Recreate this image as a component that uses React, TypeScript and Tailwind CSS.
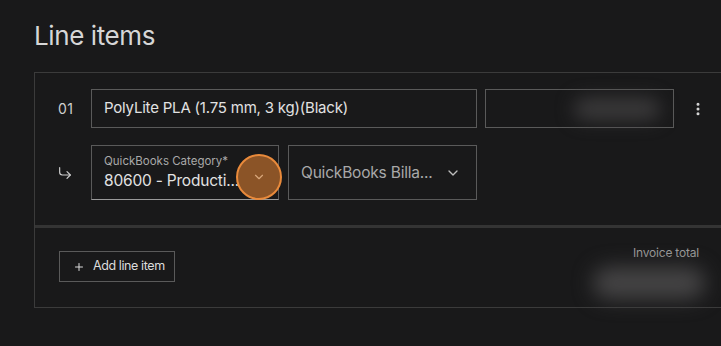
import { ChevronDown, CornerDownRight, EllipsisVertical, Plus } from 'lucide-react';

const font = { fontFamily: 'Inter, "Noto Sans", sans-serif' };

const LineItemRow = () => {
  return (
    <div className="flex flex-col gap-[17px] pt-4 pb-[25px]">
      <div className="flex items-center">
        <div className="w-[56px] pl-[23px] text-[14px] text-[#cfcfcf] tracking-wide">01</div>
        <div className="flex h-[39px] w-[386px] items-center border border-[#5a5a5a] px-3 text-[15px] tracking-[-0.2px] text-[#e2e2e2]">
          PolyLite PLA (1.75 mm, 3 kg)(Black)
        </div>
        <div className="relative ml-2 h-[39px] w-[189px] border border-[#5a5a5a]">
          <div className="absolute left-[88px] top-[8px] h-[22px] w-[86px] rounded-full bg-[#3b3a3b] blur-[9px]" />
        </div>
        <button className="ml-[12px] flex h-6 w-6 items-center justify-center text-[#d8d8d8]">
          <EllipsisVertical size={16} strokeWidth={2.5} />
        </button>
      </div>
      <div className="flex items-center">
        <div className="w-[56px] pl-[22px] text-[#cfcfcf]">
          <CornerDownRight size={16} strokeWidth={1.75} />
        </div>
        <div className="relative flex h-[55px] w-[188px] flex-col justify-center border border-[#5a5a5a] border-b-[#9a9a9a] px-3">
          <span className="text-[11.5px] leading-4 text-[#a9a9a9]">QuickBooks Category*</span>
          <span className="text-[15.5px] leading-6 tracking-[-0.2px] text-[#e2e2e2]">80600 - Producti...</span>
          <div className="absolute left-[144px] top-[8px] flex h-[46px] w-[46px] items-center justify-center rounded-full border-2 border-[#e98a3b] bg-[#8b5427]">
            <ChevronDown size={14} className="text-[#d9a77b]" />
          </div>
        </div>
        <div className="ml-[9px] flex h-[55px] w-[189px] items-center justify-between border border-[#5a5a5a] pl-3 pr-[15px]">
          <span className="text-[15.5px] tracking-[-0.2px] text-[#a9a9a9]">QuickBooks Billa...</span>
          <ChevronDown size={16} className="text-[#bdbdbd]" />
        </div>
      </div>
    </div>
  );
};

export default function App() {
  return (
    <div className="h-[346px] w-[721px] overflow-hidden bg-[#19191a]" style={font}>
      <div className="pl-[34px] pt-[18px]">
        <h2 className="text-[26px] leading-[36px] tracking-[-0.4px] text-[#d6d6d6]">Line items</h2>
        <div className="mt-[18px] w-[700px] border border-[#3b3b3b]">
          <LineItemRow />
          <div className="h-[3px] bg-[#343434]" />
          <div className="relative flex h-[79px] items-start justify-between pl-6 pr-[34px] pt-[23px]">
            <button className="flex h-[31px] w-[116px] items-center gap-2 border border-[#5a5a5a] pl-[13px] text-[12.5px] tracking-[-0.4px] text-[#dcdcdc]">
              <Plus size={12} />
              Add line item
            </button>
            <div className="relative flex flex-col items-end">
              <span className="-mt-[7px] text-[12px] tracking-[-0.2px] text-[#9c9c9c]">Invoice total</span>
              <div className="absolute right-[-6px] top-[16px] h-[32px] w-[112px] rounded-full bg-[#454445] blur-[10px]" />
            </div>
          </div>
        </div>
      </div>
    </div>
  );
}
